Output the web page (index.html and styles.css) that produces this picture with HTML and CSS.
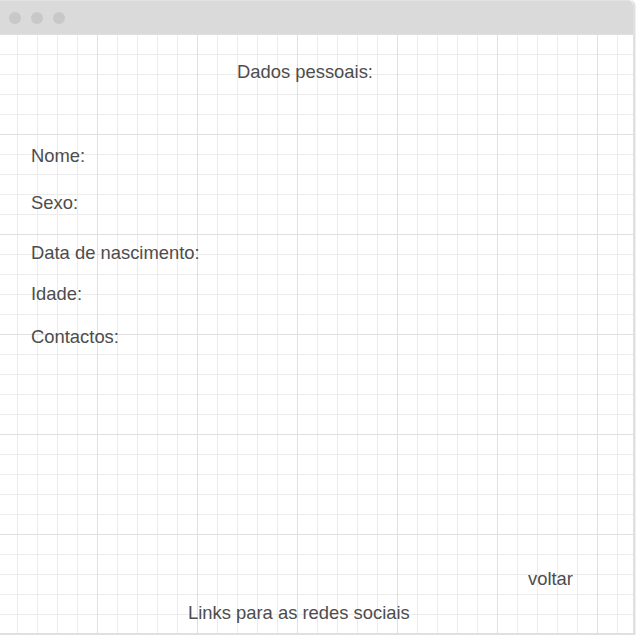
FILE: index.html
```html
<!DOCTYPE html>
<html lang="pt">
<head>
<meta charset="utf-8">
<title>Dados pessoais</title>
<link rel="stylesheet" href="styles.css">
</head>
<body>
<div class="window">
  <div class="titlebar">
    <span class="dot"></span>
    <span class="dot"></span>
    <span class="dot"></span>
  </div>
  <div class="content">
    <div class="title">Dados pessoais:</div>
    <div class="fields">
      <div class="field field-nome">Nome:</div>
      <div class="field field-sexo">Sexo:</div>
      <div class="field field-data">Data de nascimento:</div>
      <div class="field field-idade">Idade:</div>
      <div class="field field-contactos">Contactos:</div>
    </div>
    <div class="footer">
      <div class="back">voltar</div>
      <div class="links">Links para as redes sociais</div>
    </div>
  </div>
</div>
</body>
</html>
```

FILE: styles.css
```css
html, body {
  margin: 0;
  padding: 0;
  background: #ffffff;
}

body {
  font-family: "Liberation Sans", Arial, sans-serif;
  font-size: 18.4px;
  line-height: 20px;
  color: #4d4d4d;
}

.window {
  width: 633px;
  height: 633px;
  border-right: 2px solid #e0e0e0;
  border-bottom: 2px solid #e0e0e0;
  box-shadow: 1px 1px 0 #efefef;
  border-top-right-radius: 5px;
  display: flex;
  flex-direction: column;
  overflow: hidden;
}

.titlebar {
  height: 33px;
  flex: none;
  background: #dadada;
  border-top: 1px solid #e2e2e2;
  border-top-right-radius: 5px;
  display: flex;
  align-items: center;
  gap: 10px;
  padding-left: 9px;
}

.dot {
  width: 12px;
  height: 12px;
  border-radius: 50%;
  background: #c8c8c8;
}

.content {
  flex: 1;
  display: flex;
  flex-direction: column;
  background-color: #ffffff;
  background-image:
    linear-gradient(to right, #e0e0e0 1px, transparent 1px),
    linear-gradient(to bottom, #e0e0e0 1px, transparent 1px),
    linear-gradient(to right, #ececec 1px, transparent 1px),
    linear-gradient(to bottom, #ececec 1px, transparent 1px);
  background-size: 100px 100px, 100px 100px, 20px 20px, 20px 20px;
  background-position: 97px 0, 0 0, 17px 0, 0 0;
}

.title {
  margin-top: 28px;
  padding-left: 237px;
}

.fields {
  margin-top: 64px;
  padding-left: 31px;
}

.field-sexo { margin-top: 27px; }
.field-data { margin-top: 30px; }
.field-idade { margin-top: 21px; }
.field-contactos { margin-top: 23px; }

.footer {
  margin-top: auto;
  padding-bottom: 10px;
}

.back {
  padding-left: 528px;
}

.links {
  margin-top: 14px;
  padding-left: 188px;
}
```
